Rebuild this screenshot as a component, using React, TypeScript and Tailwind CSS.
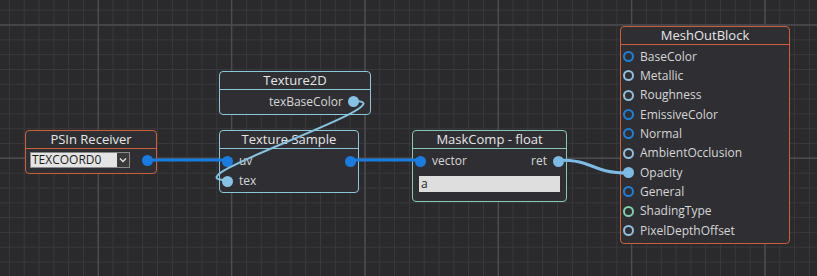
import React from 'react';

type Pin = { label: string; ring: string; filled?: boolean };

const meshPins: Pin[] = [
  { label: 'BaseColor', ring: '#1f7fd6' },
  { label: 'Metallic', ring: '#8fbfdc' },
  { label: 'Roughness', ring: '#8fbfdc' },
  { label: 'EmissiveColor', ring: '#1f7fd6' },
  { label: 'Normal', ring: '#1f7fd6' },
  { label: 'AmbientOcclusion', ring: '#8fbfdc' },
  { label: 'Opacity', ring: '#7dbbe6', filled: true },
  { label: 'General', ring: '#1f7fd6' },
  { label: 'ShadingType', ring: '#7fcfa8' },
  { label: 'PixelDepthOffset', ring: '#8fbfdc' },
];

const MINOR = 133.33 / 9;

const Grid = () => {
  const minorX = Array.from({ length: 56 }, (_, i) => 9.4 + i * MINOR);
  const minorY = Array.from({ length: 20 }, (_, i) => 10.2 + i * MINOR);
  const majorX = [98.3, 231.6, 365, 498.3, 631.6, 765];
  const majorY = [25, 158.3];
  return (
    <svg className="absolute inset-0" width={817} height={276}>
      {minorX.map((x) => (
        <line key={'mx' + x} x1={x} y1={0} x2={x} y2={276} stroke="#3a3a3e" strokeWidth={1} />
      ))}
      {minorY.map((y) => (
        <line key={'my' + y} x1={0} y1={y} x2={817} y2={y} stroke="#3a3a3e" strokeWidth={1} />
      ))}
      {majorX.map((x) => (
        <line key={'Mx' + x} x1={x} y1={0} x2={x} y2={276} stroke="#4c4c50" strokeWidth={1.5} />
      ))}
      {majorY.map((y) => (
        <line key={'My' + y} x1={0} y1={y} x2={817} y2={y} stroke="#4c4c50" strokeWidth={1.5} />
      ))}
    </svg>
  );
};

const Wires = () => (
  <svg className="absolute inset-0 pointer-events-none" width={817} height={276}>
    <line x1={149} y1={160} x2={226} y2={160} stroke="#1a7ce0" strokeWidth={3} />
    <line x1={351} y1={160} x2={419} y2={160} stroke="#1a7ce0" strokeWidth={3} />
    <path d="M 558 160 C 595 160, 591 173, 628 173" fill="none" stroke="#7dbbe6" strokeWidth={3} />
    <path d="M 354 101 C 414 101, 166 180, 226 180" fill="none" stroke="#86c2df" strokeWidth={2} />
  </svg>
);

const Dot = ({ color, filled = true }: { color: string; filled?: boolean }) => (
  <span
    className="block w-[11px] h-[11px] rounded-full shrink-0"
    style={{ background: filled ? color : 'transparent', border: `2px solid ${color}` }}
  />
);

const Header = ({ title, border }: { title: string; border: string }) => (
  <div
    className="h-[18px] flex items-center justify-center text-[13px] font-medium text-[#e6e6e6] border-b-[1.5px]"
    style={{ borderColor: border }}
  >
    {title}
  </div>
);

export default function App() {
  return (
    <div
      className="relative w-[817px] h-[276px] overflow-hidden bg-[#2a2a2d] text-[#d6d6d6]"
      style={{ fontFamily: '"Open Sans", "Noto Sans", sans-serif' }}
    >
      <Grid />

      {/* PSIn Receiver */}
      <div className="absolute left-[25px] top-[130px] w-[132px] h-[44px] rounded-[4px] border-[1.5px] border-[#c9603a] bg-[#2f2f33]">
        <Header title="PSIn Receiver" border="#c9603a" />
        <div className="flex items-center pl-[4px] pr-[3px] pt-[3px]">
          <div className="flex items-center w-[100px] h-[16px] bg-[#e4e4e4] border border-[#8a8a8a]">
            <span className="flex-1 pl-[1px] text-[12px] leading-none text-[#1c1c1c]">TEXCOORD0</span>
            <span className="flex items-center justify-center w-[12px] h-[14px] bg-[#3a3a3c]">
              <svg width="8" height="6" viewBox="0 0 8 6">
                <path d="M1 1.5 L4 4.5 L7 1.5" fill="none" stroke="#e0e0e0" strokeWidth="1.4" />
              </svg>
            </span>
          </div>
          <span className="ml-auto">
            <Dot color="#1a7ce0" />
          </span>
        </div>
      </div>

      {/* Texture2D */}
      <div className="absolute left-[219px] top-[71px] w-[152px] h-[44px] rounded-[4px] border-[1.5px] border-[#8cc6da] bg-[#2f2f33]">
        <Header title="Texture2D" border="#8cc6da" />
        <div className="flex items-center justify-end gap-[5px] h-[23px] pr-[11px] text-[12px]">
          <span>texBaseColor</span>
          <Dot color="#86c2e6" />
        </div>
      </div>

      {/* Texture Sample */}
      <div className="absolute left-[219px] top-[130px] w-[140px] h-[63px] rounded-[4px] border-[1.5px] border-[#8cc6da] bg-[#2f2f33]">
        <Header title="Texture Sample" border="#8cc6da" />
        <div className="flex flex-col pt-[2px] pl-[2px] pr-[2px] text-[12px]">
          <div className="flex items-center h-[20px] gap-[6px]">
            <Dot color="#1a7ce0" />
            <span>uv</span>
            <span className="ml-auto">
              <Dot color="#1a7ce0" />
            </span>
          </div>
          <div className="flex items-center h-[20px] gap-[6px]">
            <Dot color="#86c2e6" />
            <span>tex</span>
          </div>
        </div>
      </div>

      {/* MaskComp */}
      <div className="absolute left-[412px] top-[130px] w-[155px] h-[72px] rounded-[4px] border-[1.5px] border-[#86c8b2] bg-[#2f2f33]">
        <Header title="MaskComp - float" border="#86c8b2" />
        <div className="flex flex-col pt-[2px] px-[2px] text-[12px]">
          <div className="flex items-center h-[20px] gap-[6px]">
            <Dot color="#1a7ce0" />
            <span>vector</span>
            <span className="ml-auto flex items-center gap-[6px]">
              <span>ret</span>
              <Dot color="#7dbbe6" />
            </span>
          </div>
          <div className="mt-[5px] mx-[4px] h-[16px] bg-[#dedede] text-[#1c1c1c] text-[12px] leading-[16px] pl-[2px]">
            a
          </div>
        </div>
      </div>

      {/* MeshOutBlock */}
      <div className="absolute left-[620px] top-[26px] w-[170px] h-[218px] rounded-[4px] border-[1.5px] border-[#c9603a] bg-[#2f2f33]">
        <Header title="MeshOutBlock" border="#c9603a" />
        <div className="flex flex-col pt-[2px] pl-[2px] text-[12px]">
          {meshPins.map((p) => (
            <div key={p.label} className="flex items-center h-[19.33px] gap-[6px]">
              <Dot color={p.ring} filled={!!p.filled} />
              <span>{p.label}</span>
            </div>
          ))}
        </div>
      </div>

      <Wires />
    </div>
  );
}
